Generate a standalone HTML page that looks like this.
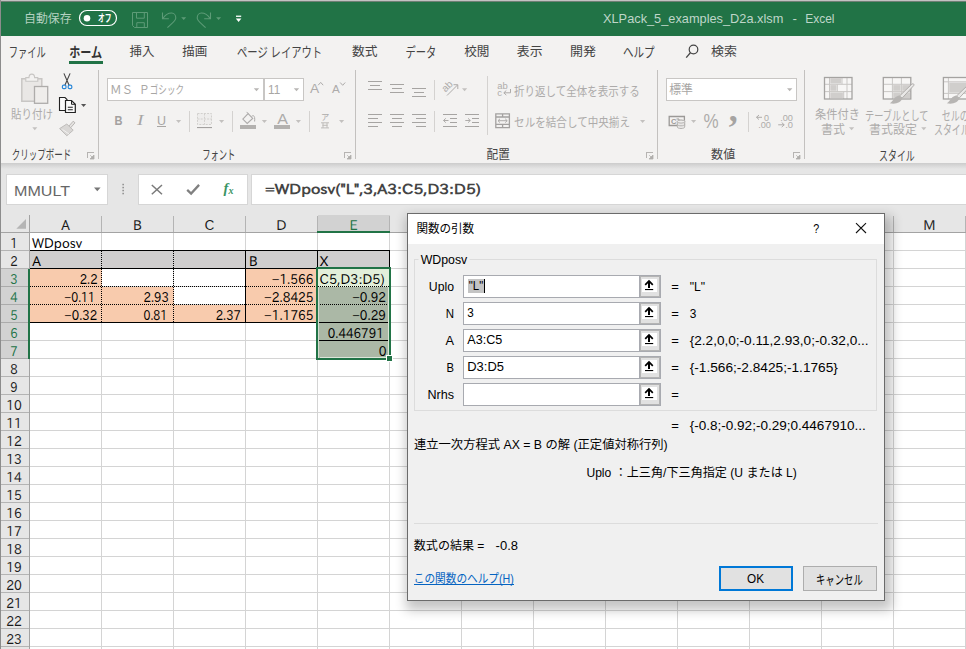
<!DOCTYPE html>
<html lang="ja"><head><meta charset="utf-8"><title>XLPack_5_examples_D2a.xlsm - Excel</title>
<style>
html,body{margin:0;padding:0;background:#fff;overflow:hidden}
body{width:966px;height:649px;position:relative;font-family:'Liberation Sans','Noto Sans CJK JP',sans-serif}
svg{position:absolute;left:0;top:0;display:block}
svg{font-family:'Liberation Sans','Noto Sans CJK JP',sans-serif}
svg text{white-space:pre}
.crisp{shape-rendering:crispEdges}
</style></head><body>
<svg width="966" height="649" viewBox="0 0 966 649">
<defs>
<filter id="blur6" x="-10%" y="-10%" width="120%" height="120%"><feGaussianBlur stdDeviation="6"/></filter>
<linearGradient id="rshadow" x1="0" y1="0" x2="0" y2="1"><stop offset="0" stop-color="#cccccc"/><stop offset="1" stop-color="#e6e6e6"/></linearGradient>
</defs>
<g id="window">
<rect x="0" y="0" width="966" height="649" fill="#ffffff" />
<rect x="0" y="0" width="966" height="36" fill="#217346" class="crisp"/>
<rect x="0" y="36" width="966" height="127" fill="#f3f2f1" class="crisp"/>
<rect x="0" y="163" width="966" height="70" fill="#e6e6e6" class="crisp"/>
<rect x="0" y="163" width="966" height="6" fill="url(#rshadow)" class="crisp"/>
</g>
<g id="titlebar">
<text x="24" y="22.6" font-size="12" fill="#b4d1c0" textLength="47.6" lengthAdjust="spacingAndGlyphs">自動保存</text>
<rect x="79.5" y="10.5" width="37" height="15" rx="7.5" fill="none" stroke="#ffffff" stroke-width="1.2"/>
<circle cx="87" cy="18.2" r="3.3" fill="#ffffff"/>
<text x="98" y="22.3" font-size="10" fill="#ffffff" textLength="13.5" lengthAdjust="spacingAndGlyphs" font-weight="bold">オフ</text>
<path d="M132.5 12.5h15v15h-13l-2-2z M136.5 12.5v5.7h7.8v-5.7 M136.8 27.5v-4.8h7.5v4.8" fill="none" stroke="#5d9b77" stroke-width="1" />
<path d="M162.5 12.4v6.4h6.3" fill="none" stroke="#5d9b77" stroke-width="1.1" />
<path d="M162.8 18.6C165 15.2 168.3 13 171.6 13C174.2 13 175.8 15.4 175.8 17.9C175.8 20.6 173.8 21.6 167.4 27.7" fill="none" stroke="#5d9b77" stroke-width="1.1" />
<path d="M181.2 17.3h5l-2.5 2.8z" fill="#5d9b77" />
<path d="M210.5 12.4v6.4h-6.3" fill="none" stroke="#5d9b77" stroke-width="1.1" />
<path d="M210.2 18.6C208 15.2 204.7 13 201.4 13C198.8 13 197.2 15.4 197.2 17.9C197.2 20.6 199.2 21.6 205.6 27.7" fill="none" stroke="#5d9b77" stroke-width="1.1" />
<path d="M216.1 17.3h5l-2.5 2.8z" fill="#5d9b77" />
<rect x="236" y="15.6" width="5.2" height="1.3" fill="#ffffff" />
<path d="M235.8 18.6h5.6l-2.8 3.4z" fill="#ffffff" />
<text x="603" y="23" font-size="13.3" fill="#bfd6c9" textLength="180.3" lengthAdjust="spacingAndGlyphs">XLPack_5_examples_D2a.xlsm</text>
<text x="792.4" y="23" font-size="13.3" fill="#bfd6c9">-</text>
<text x="805.3" y="23" font-size="13.3" fill="#bfd6c9" textLength="29.2" lengthAdjust="spacingAndGlyphs">Excel</text>
</g>
<g id="tabs">
<text x="8.7" y="56.8" font-size="13.6" fill="#444444" textLength="37.0" lengthAdjust="spacingAndGlyphs">ファイル</text>
<text x="129.5" y="56.3" font-size="12.5" fill="#444444" textLength="24.9" lengthAdjust="spacingAndGlyphs">挿入</text>
<text x="182.3" y="56.3" font-size="12.5" fill="#444444" textLength="25.0" lengthAdjust="spacingAndGlyphs">描画</text>
<text x="237" y="56.8" font-size="13.6" fill="#444444" textLength="85.2" lengthAdjust="spacingAndGlyphs">ページ レイアウト</text>
<text x="352.1" y="56.3" font-size="12.5" fill="#444444" textLength="25.5" lengthAdjust="spacingAndGlyphs">数式</text>
<text x="405.5" y="56.8" font-size="13.6" fill="#444444" textLength="30.8" lengthAdjust="spacingAndGlyphs">データ</text>
<text x="464.2" y="56.3" font-size="12.5" fill="#444444" textLength="25.2" lengthAdjust="spacingAndGlyphs">校閲</text>
<text x="516.8" y="56.3" font-size="12.5" fill="#444444" textLength="25.7" lengthAdjust="spacingAndGlyphs">表示</text>
<text x="569.9" y="56.3" font-size="12.5" fill="#444444" textLength="26.0" lengthAdjust="spacingAndGlyphs">開発</text>
<text x="623" y="56.8" font-size="13.6" fill="#444444" textLength="31.6" lengthAdjust="spacingAndGlyphs">ヘルプ</text>
<text x="711" y="56.3" font-size="12.5" fill="#444444" textLength="26" lengthAdjust="spacingAndGlyphs">検索</text>
<text x="69.2" y="56.8" font-size="13.6" fill="#333" textLength="33" lengthAdjust="spacingAndGlyphs" font-weight="bold">ホーム</text>
<rect x="69" y="61" width="34" height="3" fill="#217346" class="crisp"/>
<circle cx="693.5" cy="49.5" r="4.3" fill="none" stroke="#444" stroke-width="1.2"/>
<line x1="690.4" y1="52.8" x2="686.2" y2="57.6" stroke="#444" stroke-width="1.3" />
</g>
<g id="ribbon">
<line x1="98.5" y1="70" x2="98.5" y2="158.5" stroke="#c3c1bf" stroke-width="1" class="crisp"/>
<line x1="355.5" y1="70" x2="355.5" y2="158.5" stroke="#c3c1bf" stroke-width="1" class="crisp"/>
<line x1="657.5" y1="70" x2="657.5" y2="158.5" stroke="#c3c1bf" stroke-width="1" class="crisp"/>
<line x1="804.5" y1="70" x2="804.5" y2="158.5" stroke="#c3c1bf" stroke-width="1" class="crisp"/>
<line x1="189.5" y1="111" x2="189.5" y2="131.5" stroke="#d4d2d0" stroke-width="1" class="crisp"/>
<line x1="232.5" y1="111" x2="232.5" y2="131.5" stroke="#d4d2d0" stroke-width="1" class="crisp"/>
<line x1="309.5" y1="111" x2="309.5" y2="131.5" stroke="#d4d2d0" stroke-width="1" class="crisp"/>
<line x1="434.5" y1="79.5" x2="434.5" y2="99.5" stroke="#d4d2d0" stroke-width="1" class="crisp"/>
<line x1="434.5" y1="111" x2="434.5" y2="131.5" stroke="#d4d2d0" stroke-width="1" class="crisp"/>
<line x1="487.5" y1="76" x2="487.5" y2="134.5" stroke="#d4d2d0" stroke-width="1" class="crisp"/>
<line x1="748.5" y1="111.5" x2="748.5" y2="131.5" stroke="#d4d2d0" stroke-width="1" class="crisp"/>
<path d="M87.5 158v-5.5h6" fill="none" stroke="#b6b4b2" stroke-width="1" class="crisp"/>
<path d="M90 159h4v-4z M90.2 155.2l2.5 2.5" fill="#b0aeac" stroke="#b0aeac" stroke-width="0.8" />
<path d="M344.5 158v-5.5h6" fill="none" stroke="#b6b4b2" stroke-width="1" class="crisp"/>
<path d="M347 159h4v-4z M347.2 155.2l2.5 2.5" fill="#b0aeac" stroke="#b0aeac" stroke-width="0.8" />
<path d="M646.5 158v-5.5h6" fill="none" stroke="#b6b4b2" stroke-width="1" class="crisp"/>
<path d="M649 159h4v-4z M649.2 155.2l2.5 2.5" fill="#b0aeac" stroke="#b0aeac" stroke-width="0.8" />
<path d="M793.5 158v-5.5h6" fill="none" stroke="#b6b4b2" stroke-width="1" class="crisp"/>
<path d="M796 159h4v-4z M796.2 155.2l2.5 2.5" fill="#b0aeac" stroke="#b0aeac" stroke-width="0.8" />
<text x="11.8" y="159" font-size="13" fill="#444444" textLength="59.5" lengthAdjust="spacingAndGlyphs">クリップボード</text>
<text x="202.2" y="159" font-size="13" fill="#444444" textLength="33.2" lengthAdjust="spacingAndGlyphs">フォント</text>
<text x="486.5" y="159" font-size="12" fill="#444444" textLength="23.3" lengthAdjust="spacingAndGlyphs">配置</text>
<text x="711.1" y="159" font-size="12" fill="#444444" textLength="24.1" lengthAdjust="spacingAndGlyphs">数値</text>
<text x="879" y="159.5" font-size="13" fill="#444444" textLength="35.8" lengthAdjust="spacingAndGlyphs">スタイル</text>
<path d="M21.8 78.7h20v22.6h-20z" fill="#e9e7e5" stroke="#c8c6c4" stroke-width="1.5" />
<path d="M25.8 81.2v-3.6h3.2c0-4.6 5.6-4.6 5.6 0h3.2v3.6z" fill="#f3f2f1" stroke="#c8c6c4" stroke-width="1.1" />
<rect x="34.5" y="86.5" width="13.2" height="16.8" fill="#efedeb" stroke="#aeacaa" stroke-width="1.3" />
<text x="11.1" y="119.2" font-size="12" fill="#adabaa" textLength="41.9" lengthAdjust="spacingAndGlyphs">貼り付け</text>
<path d="M32.3 127.3h5l-2.5 3z" fill="#c3c1bf" />
<path d="M63.9 73.4l5.2 11.8 M70.1 73.4l-5.2 11.8" fill="none" stroke="#444" stroke-width="1.1" />
<rect x="62.4" y="85.2" width="3.6" height="3.4" rx="1.2" fill="#f3f2f1" stroke="#2b88d8" stroke-width="1.2"/>
<rect x="68.2" y="85.2" width="3.6" height="3.4" rx="1.2" fill="#f3f2f1" stroke="#2b88d8" stroke-width="1.2"/>
<path d="M59.5 97.5h5.5l2 2v11h-7.5z" fill="#fbfbfb" stroke="#222" stroke-width="1.1" />
<path d="M65.5 100.5h6l3.8 3.8v8.2h-9.8z" fill="#fbfbfb" stroke="#222" stroke-width="1.2" />
<path d="M71.5 100.5v3.8h3.8" fill="none" stroke="#222" stroke-width="1" />
<path d="M67.8 107.2h5 M67.8 109.7h5" fill="none" stroke="#222" stroke-width="1.1" />
<path d="M81 104.1h5.2l-2.6 3z" fill="#555" />
<path d="M73.2 121.2l1.8 1.6l-4.6 5.2l-1.8-1.6z" fill="#e4e2e0" stroke="#b3b1af" stroke-width="0.9" />
<path d="M59.6 128.6l7.2-4.6l6.4 6.2l-6.4 5.6z" fill="#d9d7d5" stroke="#bab8b6" stroke-width="0.9" />
<path d="M62.5 129.5l6.5 4.5" fill="none" stroke="#f3f2f1" stroke-width="1" />
<rect x="107.5" y="78.5" width="156" height="22" fill="#ffffff" stroke="#c8c6c4" stroke-width="1" />
<rect x="264.5" y="78.5" width="39" height="22" fill="#ffffff" stroke="#c8c6c4" stroke-width="1" />
<text x="110" y="94.3" font-size="11.5" fill="#a8a6a4" textLength="23.2" lengthAdjust="spacingAndGlyphs">ＭＳ</text>
<text x="138.9" y="94.3" font-size="11.5" fill="#a8a6a4" textLength="10.6" lengthAdjust="spacingAndGlyphs">Ｐ</text>
<text x="149.8" y="94.3" font-size="11.5" fill="#a8a6a4" textLength="34.2" lengthAdjust="spacingAndGlyphs">ゴシック</text>
<path d="M253.8 88.3h5.4l-2.7 3z" fill="#b8b6b4" />
<text x="268" y="94.3" font-size="12" fill="#a8a6a4" textLength="12.2" lengthAdjust="spacingAndGlyphs">11</text>
<path d="M293.8 88.3h5.4l-2.7 3z" fill="#b8b6b4" />
<text x="309.9" y="93" font-size="13.5" fill="#adabaa" textLength="9.2" lengthAdjust="spacingAndGlyphs">A</text>
<path d="M318.2 85.2l2.5-2.8l2.5 2.8" fill="none" stroke="#adabaa" stroke-width="1" />
<text x="332" y="93" font-size="11.5" fill="#adabaa" textLength="7.8" lengthAdjust="spacingAndGlyphs">A</text>
<path d="M340.2 82.5l2.5 2.8l2.5-2.8" fill="none" stroke="#adabaa" stroke-width="1" />
<text x="114.4" y="124.7" font-size="13.5" fill="#a3a1a0" textLength="8" lengthAdjust="spacingAndGlyphs" font-weight="bold">B</text>
<text x="136.9" y="124.7" font-size="14" fill="#a8a6a4" textLength="6.5" lengthAdjust="spacingAndGlyphs" font-family='"Liberation Serif",serif' font-style="italic">I</text>
<text x="157" y="124.5" font-size="13" fill="#a8a6a4" textLength="9" lengthAdjust="spacingAndGlyphs">U</text>
<rect x="157" y="126" width="9" height="1" fill="#a8a6a4" class="crisp"/>
<path d="M176 120h5.2l-2.6 3z" fill="#c3c1bf" />
<rect x="197.5" y="113.5" width="14" height="11" fill="#eeedec" />
<path d="M197.5 113.5h14v11h-14z M204.5 113.5v11 M197.5 119h14" fill="none" stroke="#d2d0ce" stroke-width="1" stroke-dasharray="2 1.2"/>
<rect x="197" y="127" width="15" height="1.1" fill="#a3a1a0" />
<path d="M219 120h5.2l-2.6 3z" fill="#c3c1bf" />
<path d="M242.8 119.1l5.3-5.6l4.6 4.9l-5.5 5z" fill="none" stroke="#adabaa" stroke-width="1.1" />
<path d="M248.2 113.6l-1.6-1.7 M251.6 116.3c2.3-1.7 3.6 0.2 3 5.2" fill="none" stroke="#adabaa" stroke-width="1" />
<rect x="240" y="125" width="16" height="4" fill="#b3b1af" class="crisp"/>
<path d="M261.8 120h5.2l-2.6 3z" fill="#c3c1bf" />
<text x="277.3" y="123.6" font-size="14.5" fill="#adabaa" textLength="10.7" lengthAdjust="spacingAndGlyphs">A</text>
<rect x="274" y="125" width="16" height="4" fill="#b3b1af" class="crisp"/>
<path d="M295.8 120h5.2l-2.6 3z" fill="#c3c1bf" />
<text x="321" y="120" font-size="8.3" fill="#adabaa">ア</text>
<path d="M321 122.8h8 M322.5 125.3h5 M321 127.9h8 M323 122.8v5 M327 122.8v5" fill="none" stroke="#bebcba" stroke-width="1" />
<path d="M339 120h5.2l-2.6 3z" fill="#c3c1bf" />
<rect x="368.0" y="81" width="14" height="1" fill="#a6a4a2" class="crisp"/>
<rect x="370.0" y="85" width="10" height="1" fill="#a6a4a2" class="crisp"/>
<rect x="368.0" y="89" width="14" height="1" fill="#a6a4a2" class="crisp"/>
<rect x="390.0" y="84" width="14" height="1" fill="#a6a4a2" class="crisp"/>
<rect x="392.0" y="88" width="10" height="1" fill="#a6a4a2" class="crisp"/>
<rect x="390.0" y="92" width="14" height="1" fill="#a6a4a2" class="crisp"/>
<rect x="412.0" y="88" width="14" height="1" fill="#a6a4a2" class="crisp"/>
<rect x="414.0" y="92" width="10" height="1" fill="#a6a4a2" class="crisp"/>
<rect x="412.0" y="96" width="14" height="1" fill="#a6a4a2" class="crisp"/>
<rect x="368" y="114" width="14" height="1" fill="#a6a4a2" class="crisp"/>
<rect x="368" y="118" width="10" height="1" fill="#a6a4a2" class="crisp"/>
<rect x="368" y="122" width="14" height="1" fill="#a6a4a2" class="crisp"/>
<rect x="368" y="126" width="10" height="1" fill="#a6a4a2" class="crisp"/>
<rect x="390.0" y="114" width="14" height="1" fill="#a6a4a2" class="crisp"/>
<rect x="392.0" y="118" width="10" height="1" fill="#a6a4a2" class="crisp"/>
<rect x="390.0" y="122" width="14" height="1" fill="#a6a4a2" class="crisp"/>
<rect x="392.0" y="126" width="10" height="1" fill="#a6a4a2" class="crisp"/>
<rect x="412" y="114" width="14" height="1" fill="#a6a4a2" class="crisp"/>
<rect x="416" y="118" width="10" height="1" fill="#a6a4a2" class="crisp"/>
<rect x="412" y="122" width="14" height="1" fill="#a6a4a2" class="crisp"/>
<rect x="416" y="126" width="10" height="1" fill="#a6a4a2" class="crisp"/>
<text x='0' y='0' font-size='10' fill='#aeacaa' transform='translate(445.6 92.6) rotate(-45)'>ab</text>
<path d="M447 95.5l10.5-10.5 M453.5 84.7h4.3v4.3" fill="none" stroke="#aeacaa" stroke-width="1" />
<path d="M462 88.3h5.2l-2.6 3z" fill="#c3c1bf" />
<rect x="443" y="114" width="14" height="1" fill="#a6a4a2" class="crisp"/>
<rect x="443" y="126" width="14" height="1" fill="#a6a4a2" class="crisp"/>
<rect x="450" y="118" width="7" height="1" fill="#a6a4a2" class="crisp"/>
<rect x="450" y="122" width="7" height="1" fill="#a6a4a2" class="crisp"/>
<path d="M448.5 120.5h-5 M445.8 118.3l-2.3 2.2l2.3 2.2" fill="none" stroke="#aeacaa" stroke-width="1" />
<rect x="465" y="114" width="14" height="1" fill="#a6a4a2" class="crisp"/>
<rect x="465" y="126" width="14" height="1" fill="#a6a4a2" class="crisp"/>
<rect x="472" y="118" width="7" height="1" fill="#a6a4a2" class="crisp"/>
<rect x="472" y="122" width="7" height="1" fill="#a6a4a2" class="crisp"/>
<path d="M465.3 120.5h5 M468 118.3l2.3 2.2l-2.3 2.2" fill="none" stroke="#aeacaa" stroke-width="1" />
<text x="497.3" y="89.3" font-size="9.5" fill="#aeacaa" textLength="10.5" lengthAdjust="spacingAndGlyphs">ab</text>
<text x="497.3" y="96.3" font-size="9.5" fill="#aeacaa">c</text>
<path d="M510.5 89v3.8h-6.5 M506.3 90.5l-2.5 2.3l2.5 2.3" fill="none" stroke="#aeacaa" stroke-width="1" />
<text x="514.1" y="95.8" font-size="12" fill="#adabaa" textLength="125.8" lengthAdjust="spacingAndGlyphs">折り返して全体を表示する</text>
<path d="M495.8 113.8h13.6v13.8h-13.6z M495.8 117h13.6 M495.8 124.4h13.6 M502.6 113.8v3.2 M502.6 124.4v3.2" fill="none" stroke="#a3a1a0" stroke-width="1.3" />
<path d="M498 120.7h9.2 M500 118.8l-2 1.9l2 1.9 M505.2 118.8l2 1.9l-2 1.9" fill="none" stroke="#aeacaa" stroke-width="1" />
<text x="514.1" y="127.2" font-size="12" fill="#adabaa" textLength="115.9" lengthAdjust="spacingAndGlyphs">セルを結合して中央揃え</text>
<path d="M640 120h5.2l-2.6 3z" fill="#c3c1bf" />
<rect x="666.5" y="78.5" width="130" height="22" fill="#ffffff" stroke="#c8c6c4" stroke-width="1" />
<text x="669.2" y="94.4" font-size="12" fill="#a8a6a4" textLength="23.7" lengthAdjust="spacingAndGlyphs">標準</text>
<path d="M787 88.3h5.4l-2.7 3z" fill="#b8b6b4" />
<path d="M669.2 116.5h15.2v9h-15.2z" fill="none" stroke="#9b9997" stroke-width="1.3" />
<text x="671" y="123.6" font-size="7.5" fill="#9b9997" font-weight="bold">C</text>
<path d="M676.5 119h2.5v3" fill="none" stroke="#9b9997" stroke-width="1" />
<ellipse cx="681" cy="121.6" rx="3.7" ry="1.5" fill="#f3f2f1" stroke="#b5b3b1" stroke-width="1"/>
<path d="M677.3 121.6v5.4c0 2 7.4 2 7.4 0v-5.4 M677.3 124.3c0 2 7.4 2 7.4 0" fill="#e8e7e6" stroke="#b5b3b1" stroke-width="1" />
<ellipse cx="681" cy="121.6" rx="3.7" ry="1.5" fill="#efeeed" stroke="#b5b3b1" stroke-width="1"/>
<path d="M691 120h5.2l-2.6 3z" fill="#c3c1bf" />
<text x="703.5" y="128.2" font-size="20" fill="#aeacaa" textLength="15.1" lengthAdjust="spacingAndGlyphs">%</text>
<text x="728.8" y="120.8" font-size="36" fill="#a6a4a2" font-weight="bold" font-family='"Liberation Serif",serif'>,</text>
<path d="M756.5 117.3h5.5 M759.0 115l-2.5 2.3l2.5 2.3" fill="none" stroke="#aeacaa" stroke-width="1" />
<text x="764.0" y="120.5" font-size="9" fill="#aeacaa" textLength="5" lengthAdjust="spacingAndGlyphs">0</text>
<text x="758.2" y="128.3" font-size="9" fill="#aeacaa" textLength="12.8" lengthAdjust="spacingAndGlyphs">.00</text>
<text x="780.2" y="120.5" font-size="9" fill="#aeacaa" textLength="12.8" lengthAdjust="spacingAndGlyphs">.00</text>
<path d="M778.2 124.8h6 M781.7 122.5l2.5 2.3l-2.5 2.3" fill="none" stroke="#aeacaa" stroke-width="1" />
<text x="785.2" y="128.3" font-size="9" fill="#aeacaa" textLength="7.8" lengthAdjust="spacingAndGlyphs">.0</text>
<rect x="824.5" y="77.5" width="27.5" height="21.5" fill="#f7f6f5" />
<rect x="830.3" y="78.3" width="10.9" height="5.1999999999999975" fill="#d0cecc" />
<rect x="830.3" y="85.1" width="6.199999999999955" height="5.6999999999999975" fill="#d0cecc" />
<rect x="830.3" y="92.39999999999999" width="12.600000000000046" height="5.800000000000006" fill="#d0cecc" />
<line x1="829.5" y1="77.5" x2="829.5" y2="99.0" stroke="#c9c7c5" stroke-width="1" />
<line x1="847" y1="77.5" x2="847" y2="99.0" stroke="#c9c7c5" stroke-width="1" />
<line x1="824.5" y1="84.3" x2="852.0" y2="84.3" stroke="#c9c7c5" stroke-width="1" />
<line x1="824.5" y1="91.6" x2="852.0" y2="91.6" stroke="#c9c7c5" stroke-width="1" />
<line x1="842" y1="77.5" x2="842" y2="84.3" stroke="#c9c7c5" stroke-width="1" />
<line x1="837.3" y1="84.3" x2="837.3" y2="91.6" stroke="#c9c7c5" stroke-width="1" />
<line x1="843.7" y1="91.6" x2="843.7" y2="99" stroke="#c9c7c5" stroke-width="1" />
<rect x="824.5" y="77.5" width="27.5" height="21.5" fill="none" stroke="#a5a3a1" stroke-width="1.3" />
<text x="815.1" y="119.4" font-size="12" fill="#adabaa" textLength="45" lengthAdjust="spacingAndGlyphs">条件付き</text>
<text x="821" y="133.8" font-size="12" fill="#adabaa" textLength="24" lengthAdjust="spacingAndGlyphs">書式</text>
<path d="M849 127.2h5.2l-2.6 3z" fill="#c3c1bf" />
<rect x="883.3" y="77.5" width="27.5" height="21.5" fill="#f7f6f5" />
<rect x="893.1999999999999" y="85.1" width="7.4" height="5.6999999999999975" fill="#d0cecc" />
<rect x="902.1999999999999" y="85.1" width="7.799999999999978" height="5.6999999999999975" fill="#d0cecc" />
<rect x="893.1999999999999" y="92.39999999999999" width="7.4" height="5.800000000000006" fill="#d0cecc" />
<rect x="902.1999999999999" y="92.39999999999999" width="7.799999999999978" height="5.800000000000006" fill="#d0cecc" />
<line x1="892.4" y1="77.5" x2="892.4" y2="99.0" stroke="#c9c7c5" stroke-width="1" />
<line x1="901.4" y1="77.5" x2="901.4" y2="99.0" stroke="#c9c7c5" stroke-width="1" />
<line x1="883.3" y1="84.3" x2="910.8" y2="84.3" stroke="#c9c7c5" stroke-width="1" />
<line x1="883.3" y1="91.6" x2="910.8" y2="91.6" stroke="#c9c7c5" stroke-width="1" />
<rect x="883.3" y="77.5" width="27.5" height="21.5" fill="none" stroke="#a5a3a1" stroke-width="1.3" />
<path d="M911.9 84.1c1.4-1 2.6 0.2 1.8 1.5l-11.6 12.6l-2.6-2.2z" fill="#e9e8e7" stroke="#a9a7a5" stroke-width="0.9" />
<path d="M899.0 95.6l3.4 3c-1.4 4-7 6-12.6 4.6c3.4-1.2 3.6-6.2 9.2-7.6z" fill="#b7b5b3" />
<text x="865" y="119.8" font-size="12.8" fill="#adabaa" textLength="63.5" lengthAdjust="spacingAndGlyphs">テーブルとして</text>
<text x="869.1" y="133.8" font-size="12" fill="#adabaa" textLength="47.8" lengthAdjust="spacingAndGlyphs">書式設定</text>
<path d="M921.2 127.2h5.2l-2.6 3z" fill="#c3c1bf" />
<rect x="943.4" y="77.5" width="27.5" height="21.5" fill="#f7f6f5" />
<rect x="949.1999999999999" y="82.6" width="21.00000000000002" height="10.000000000000009" fill="#d0cecc" />
<line x1="948.4" y1="77.5" x2="948.4" y2="99.0" stroke="#c9c7c5" stroke-width="1" />
<line x1="943.4" y1="81.8" x2="970.9" y2="81.8" stroke="#c9c7c5" stroke-width="1" />
<line x1="943.4" y1="93.4" x2="970.9" y2="93.4" stroke="#c9c7c5" stroke-width="1" />
<rect x="943.4" y="77.5" width="27.5" height="21.5" fill="none" stroke="#a5a3a1" stroke-width="1.3" />
<path d="M968.9 84.1c1.4-1 2.6 0.2 1.8 1.5l-11.6 12.6l-2.6-2.2z" fill="#e9e8e7" stroke="#a9a7a5" stroke-width="0.9" />
<path d="M956.0 95.6l3.4 3c-1.4 4-7 6-12.6 4.6c3.4-1.2 3.6-6.2 9.2-7.6z" fill="#b7b5b3" />
<text x="941.8" y="119.8" font-size="12.8" fill="#adabaa" textLength="27" lengthAdjust="spacingAndGlyphs">セルの</text>
<text x="934" y="134.2" font-size="12.8" fill="#adabaa" textLength="35.5" lengthAdjust="spacingAndGlyphs">スタイル</text>
</g>
<g id="formulabar">
<rect x="6.5" y="174.5" width="101" height="30" fill="#ffffff" stroke="#d6d6d6" stroke-width="1" />
<rect x="138.5" y="174.5" width="109" height="30" fill="#ffffff" stroke="#d6d6d6" stroke-width="1" />
<rect x="251.5" y="174.5" width="720" height="30" fill="#ffffff" stroke="#d6d6d6" stroke-width="1" />
<text x="14" y="196.3" font-size="15" fill="#666" textLength="56" lengthAdjust="spacingAndGlyphs">MMULT</text>
<path d="M94 187.5h6.6l-3.3 3.7z" fill="#777" />
<rect x="122.4" y="183.8" width="1.5" height="1.5" fill="#8c8c8c" />
<rect x="122.4" y="186.8" width="1.5" height="1.5" fill="#8c8c8c" />
<rect x="122.4" y="189.8" width="1.5" height="1.5" fill="#8c8c8c" />
<rect x="122.4" y="192.8" width="1.5" height="1.5" fill="#8c8c8c" />
<path d="M151.8 185l10.2 9.3 M162 185l-10.2 9.3" fill="none" stroke="#7a7a7a" stroke-width="1.5" />
<path d="M187.2 189.8l3.9 3.7l8-8.6" fill="none" stroke="#808080" stroke-width="2.3" />
<text x="223.6" y="193.3" font-size="14.5" fill="#3a9463" font-weight="bold" font-family='"Liberation Serif",serif' font-style="italic">f</text>
<text x="228.4" y="193.8" font-size="10" fill="#3a9463" font-weight="bold" font-family='"Liberation Serif",serif' font-style="italic">x</text>
<text x="265" y="193.8" font-size="13.8" fill="#444" textLength="216" lengthAdjust="spacingAndGlyphs" font-weight="bold" font-family='"IPAPGothic","IPAGothic","Liberation Sans","Noto Sans CJK JP",sans-serif'>=WDposv("L",3,A3:C5,D3:D5)</text>
</g>
<g id="grid">
<rect x="30" y="233" width="936" height="416" fill="#ffffff" class="crisp"/>
<rect x="0" y="215" width="966" height="18" fill="#e6e6e6" class="crisp"/>
<rect x="0" y="233" width="29" height="416" fill="#e6e6e6" class="crisp"/>
<rect x="30" y="251" width="360" height="18" fill="#d0cece" class="crisp"/>
<rect x="30" y="269" width="72" height="54" fill="#f8cbad" class="crisp"/>
<rect x="102" y="287" width="72" height="36" fill="#f8cbad" class="crisp"/>
<rect x="174" y="305" width="72" height="18" fill="#f8cbad" class="crisp"/>
<rect x="246" y="269" width="72" height="54" fill="#f8cbad" class="crisp"/>
<rect x="318" y="269" width="72" height="18" fill="#e2efda" class="crisp"/>
<rect x="318" y="287" width="72" height="72" fill="#abb8a6" class="crisp"/>
<rect x="318" y="215" width="72" height="18" fill="#d2d2d2" class="crisp"/>
<rect x="0" y="269" width="29" height="90" fill="#d2d2d2" class="crisp"/>
<rect x="30" y="250" width="936" height="1" fill="#d4d4d4" class="crisp"/>
<rect x="0" y="250" width="29" height="1" fill="#b4b4b4" class="crisp"/>
<rect x="30" y="268" width="936" height="1" fill="#d4d4d4" class="crisp"/>
<rect x="0" y="268" width="29" height="1" fill="#b4b4b4" class="crisp"/>
<rect x="30" y="286" width="936" height="1" fill="#d4d4d4" class="crisp"/>
<rect x="0" y="286" width="29" height="1" fill="#ababab" class="crisp"/>
<rect x="30" y="304" width="936" height="1" fill="#d4d4d4" class="crisp"/>
<rect x="0" y="304" width="29" height="1" fill="#ababab" class="crisp"/>
<rect x="30" y="322" width="936" height="1" fill="#d4d4d4" class="crisp"/>
<rect x="0" y="322" width="29" height="1" fill="#ababab" class="crisp"/>
<rect x="30" y="340" width="936" height="1" fill="#d4d4d4" class="crisp"/>
<rect x="0" y="340" width="29" height="1" fill="#ababab" class="crisp"/>
<rect x="30" y="358" width="936" height="1" fill="#d4d4d4" class="crisp"/>
<rect x="0" y="358" width="29" height="1" fill="#ababab" class="crisp"/>
<rect x="30" y="376" width="936" height="1" fill="#d4d4d4" class="crisp"/>
<rect x="0" y="376" width="29" height="1" fill="#b4b4b4" class="crisp"/>
<rect x="30" y="394" width="936" height="1" fill="#d4d4d4" class="crisp"/>
<rect x="0" y="394" width="29" height="1" fill="#b4b4b4" class="crisp"/>
<rect x="30" y="412" width="936" height="1" fill="#d4d4d4" class="crisp"/>
<rect x="0" y="412" width="29" height="1" fill="#b4b4b4" class="crisp"/>
<rect x="30" y="430" width="936" height="1" fill="#d4d4d4" class="crisp"/>
<rect x="0" y="430" width="29" height="1" fill="#b4b4b4" class="crisp"/>
<rect x="30" y="448" width="936" height="1" fill="#d4d4d4" class="crisp"/>
<rect x="0" y="448" width="29" height="1" fill="#b4b4b4" class="crisp"/>
<rect x="30" y="466" width="936" height="1" fill="#d4d4d4" class="crisp"/>
<rect x="0" y="466" width="29" height="1" fill="#b4b4b4" class="crisp"/>
<rect x="30" y="484" width="936" height="1" fill="#d4d4d4" class="crisp"/>
<rect x="0" y="484" width="29" height="1" fill="#b4b4b4" class="crisp"/>
<rect x="30" y="502" width="936" height="1" fill="#d4d4d4" class="crisp"/>
<rect x="0" y="502" width="29" height="1" fill="#b4b4b4" class="crisp"/>
<rect x="30" y="520" width="936" height="1" fill="#d4d4d4" class="crisp"/>
<rect x="0" y="520" width="29" height="1" fill="#b4b4b4" class="crisp"/>
<rect x="30" y="538" width="936" height="1" fill="#d4d4d4" class="crisp"/>
<rect x="0" y="538" width="29" height="1" fill="#b4b4b4" class="crisp"/>
<rect x="30" y="556" width="936" height="1" fill="#d4d4d4" class="crisp"/>
<rect x="0" y="556" width="29" height="1" fill="#b4b4b4" class="crisp"/>
<rect x="30" y="574" width="936" height="1" fill="#d4d4d4" class="crisp"/>
<rect x="0" y="574" width="29" height="1" fill="#b4b4b4" class="crisp"/>
<rect x="30" y="592" width="936" height="1" fill="#d4d4d4" class="crisp"/>
<rect x="0" y="592" width="29" height="1" fill="#b4b4b4" class="crisp"/>
<rect x="30" y="610" width="936" height="1" fill="#d4d4d4" class="crisp"/>
<rect x="0" y="610" width="29" height="1" fill="#b4b4b4" class="crisp"/>
<rect x="30" y="628" width="936" height="1" fill="#d4d4d4" class="crisp"/>
<rect x="0" y="628" width="29" height="1" fill="#b4b4b4" class="crisp"/>
<rect x="30" y="646" width="936" height="1" fill="#d4d4d4" class="crisp"/>
<rect x="0" y="646" width="29" height="1" fill="#b4b4b4" class="crisp"/>
<rect x="101" y="233" width="1" height="416" fill="#d4d4d4" class="crisp"/>
<rect x="101" y="216" width="1" height="16" fill="#b4b4b4" class="crisp"/>
<rect x="173" y="233" width="1" height="416" fill="#d4d4d4" class="crisp"/>
<rect x="173" y="216" width="1" height="16" fill="#b4b4b4" class="crisp"/>
<rect x="245" y="233" width="1" height="416" fill="#d4d4d4" class="crisp"/>
<rect x="245" y="216" width="1" height="16" fill="#b4b4b4" class="crisp"/>
<rect x="317" y="233" width="1" height="416" fill="#d4d4d4" class="crisp"/>
<rect x="317" y="216" width="1" height="16" fill="#b4b4b4" class="crisp"/>
<rect x="389" y="233" width="1" height="416" fill="#d4d4d4" class="crisp"/>
<rect x="389" y="216" width="1" height="16" fill="#b4b4b4" class="crisp"/>
<rect x="461" y="233" width="1" height="416" fill="#d4d4d4" class="crisp"/>
<rect x="461" y="216" width="1" height="16" fill="#b4b4b4" class="crisp"/>
<rect x="533" y="233" width="1" height="416" fill="#d4d4d4" class="crisp"/>
<rect x="533" y="216" width="1" height="16" fill="#b4b4b4" class="crisp"/>
<rect x="605" y="233" width="1" height="416" fill="#d4d4d4" class="crisp"/>
<rect x="605" y="216" width="1" height="16" fill="#b4b4b4" class="crisp"/>
<rect x="677" y="233" width="1" height="416" fill="#d4d4d4" class="crisp"/>
<rect x="677" y="216" width="1" height="16" fill="#b4b4b4" class="crisp"/>
<rect x="749" y="233" width="1" height="416" fill="#d4d4d4" class="crisp"/>
<rect x="749" y="216" width="1" height="16" fill="#b4b4b4" class="crisp"/>
<rect x="821" y="233" width="1" height="416" fill="#d4d4d4" class="crisp"/>
<rect x="821" y="216" width="1" height="16" fill="#b4b4b4" class="crisp"/>
<rect x="893" y="233" width="1" height="416" fill="#d4d4d4" class="crisp"/>
<rect x="893" y="216" width="1" height="16" fill="#b4b4b4" class="crisp"/>
<rect x="965" y="233" width="1" height="416" fill="#d4d4d4" class="crisp"/>
<rect x="965" y="216" width="1" height="16" fill="#b4b4b4" class="crisp"/>
<rect x="29" y="215" width="1" height="434" fill="#a3a3a3" class="crisp"/>
<rect x="0" y="232" width="966" height="1" fill="#a3a3a3" class="crisp"/>
<rect x="30" y="251" width="360" height="17" fill="#d0cece" class="crisp"/>
<rect x="30" y="269" width="72" height="54" fill="#f8cbad" class="crisp"/>
<rect x="102" y="287" width="72" height="36" fill="#f8cbad" class="crisp"/>
<rect x="174" y="305" width="72" height="18" fill="#f8cbad" class="crisp"/>
<rect x="246" y="269" width="72" height="54" fill="#f8cbad" class="crisp"/>
<rect x="318" y="269" width="72" height="18" fill="#e2efda" class="crisp"/>
<rect x="318" y="287" width="72" height="72" fill="#abb8a6" class="crisp"/>
<rect x="30" y="250" width="360" height="1" fill="#000000" class="crisp"/>
<rect x="30" y="268" width="360" height="1" fill="#000000" class="crisp"/>
<rect x="30" y="322" width="288" height="1" fill="#000000" class="crisp"/>
<rect x="245" y="250" width="1" height="73" fill="#000000" class="crisp"/>
<rect x="317" y="250" width="1" height="73" fill="#000000" class="crisp"/>
<rect x="389" y="250" width="1" height="19" fill="#000000" class="crisp"/>
<rect x="318" y="322" width="72" height="1" fill="#000000" class="crisp"/>
<rect x="318" y="340" width="72" height="1" fill="#000000" class="crisp"/>
<line x1="30" y1="286.5" x2="390" y2="286.5" stroke="#000" stroke-width="1" stroke-dasharray="1 1" class="crisp"/>
<line x1="30" y1="304.5" x2="390" y2="304.5" stroke="#000" stroke-width="1" stroke-dasharray="1 1" class="crisp"/>
<line x1="101.5" y1="251" x2="101.5" y2="322" stroke="#000" stroke-width="1" stroke-dasharray="1 1" class="crisp"/>
<line x1="173.5" y1="251" x2="173.5" y2="322" stroke="#000" stroke-width="1" stroke-dasharray="1 1" class="crisp"/>
<rect x="28" y="269" width="2" height="90" fill="#217346" class="crisp"/>
<rect x="317" y="231" width="73" height="2" fill="#217346" class="crisp"/>
<rect x="316" y="267" width="75" height="2" fill="#217346" class="crisp"/>
<rect x="316" y="358" width="70" height="2" fill="#217346" class="crisp"/>
<rect x="316" y="267" width="2" height="93" fill="#217346" class="crisp"/>
<rect x="389" y="267" width="2" height="88" fill="#217346" class="crisp"/>
<rect x="388" y="287" width="1" height="71" fill="#dde6da" class="crisp"/>
<rect x="318" y="287" width="1" height="71" fill="#d3dcd0" class="crisp"/>
<rect x="320" y="357" width="68" height="1" fill="#dde6da" class="crisp"/>
<rect x="386" y="355" width="7" height="7" fill="#ffffff" class="crisp"/>
<rect x="387" y="356" width="5" height="5" fill="#217346" class="crisp"/>
<path d="M16.3 228.8h9.7v-9.7z" fill="#b5b5b5" />
<text x="65.5" y="229.5" font-size="13.6" fill="#1a1a1a" font-family='"IPAPGothic","IPAGothic","Liberation Sans","Noto Sans CJK JP",sans-serif' text-anchor="middle">A</text>
<text x="137.5" y="229.5" font-size="13.6" fill="#1a1a1a" font-family='"IPAPGothic","IPAGothic","Liberation Sans","Noto Sans CJK JP",sans-serif' text-anchor="middle">B</text>
<text x="209.5" y="229.5" font-size="13.6" fill="#1a1a1a" font-family='"IPAPGothic","IPAGothic","Liberation Sans","Noto Sans CJK JP",sans-serif' text-anchor="middle">C</text>
<text x="281.5" y="229.5" font-size="13.6" fill="#1a1a1a" font-family='"IPAPGothic","IPAGothic","Liberation Sans","Noto Sans CJK JP",sans-serif' text-anchor="middle">D</text>
<text x="353.5" y="229.5" font-size="13.6" fill="#217346" font-family='"IPAPGothic","IPAGothic","Liberation Sans","Noto Sans CJK JP",sans-serif' text-anchor="middle">E</text>
<text x="929.5" y="229.5" font-size="13.6" fill="#1a1a1a" font-family='"IPAPGothic","IPAGothic","Liberation Sans","Noto Sans CJK JP",sans-serif' text-anchor="middle">M</text>
<text x="14" y="247.6" font-size="13.5" fill="#1a1a1a" textLength="7.4" lengthAdjust="spacingAndGlyphs" font-family='"IPAPGothic","IPAGothic","Liberation Sans","Noto Sans CJK JP",sans-serif' text-anchor="middle">1</text>
<text x="14" y="265.6" font-size="13.5" fill="#1a1a1a" textLength="7.4" lengthAdjust="spacingAndGlyphs" font-family='"IPAPGothic","IPAGothic","Liberation Sans","Noto Sans CJK JP",sans-serif' text-anchor="middle">2</text>
<text x="14" y="283.6" font-size="13.5" fill="#217346" textLength="7.4" lengthAdjust="spacingAndGlyphs" font-family='"IPAPGothic","IPAGothic","Liberation Sans","Noto Sans CJK JP",sans-serif' text-anchor="middle">3</text>
<text x="14" y="301.6" font-size="13.5" fill="#217346" textLength="7.4" lengthAdjust="spacingAndGlyphs" font-family='"IPAPGothic","IPAGothic","Liberation Sans","Noto Sans CJK JP",sans-serif' text-anchor="middle">4</text>
<text x="14" y="319.6" font-size="13.5" fill="#217346" textLength="7.4" lengthAdjust="spacingAndGlyphs" font-family='"IPAPGothic","IPAGothic","Liberation Sans","Noto Sans CJK JP",sans-serif' text-anchor="middle">5</text>
<text x="14" y="337.6" font-size="13.5" fill="#217346" textLength="7.4" lengthAdjust="spacingAndGlyphs" font-family='"IPAPGothic","IPAGothic","Liberation Sans","Noto Sans CJK JP",sans-serif' text-anchor="middle">6</text>
<text x="14" y="355.6" font-size="13.5" fill="#217346" textLength="7.4" lengthAdjust="spacingAndGlyphs" font-family='"IPAPGothic","IPAGothic","Liberation Sans","Noto Sans CJK JP",sans-serif' text-anchor="middle">7</text>
<text x="14" y="373.6" font-size="13.5" fill="#1a1a1a" textLength="7.4" lengthAdjust="spacingAndGlyphs" font-family='"IPAPGothic","IPAGothic","Liberation Sans","Noto Sans CJK JP",sans-serif' text-anchor="middle">8</text>
<text x="14" y="391.6" font-size="13.5" fill="#1a1a1a" textLength="7.4" lengthAdjust="spacingAndGlyphs" font-family='"IPAPGothic","IPAGothic","Liberation Sans","Noto Sans CJK JP",sans-serif' text-anchor="middle">9</text>
<text x="14" y="409.6" font-size="13.5" fill="#1a1a1a" textLength="15.6" lengthAdjust="spacingAndGlyphs" font-family='"IPAPGothic","IPAGothic","Liberation Sans","Noto Sans CJK JP",sans-serif' text-anchor="middle">10</text>
<text x="14" y="427.6" font-size="13.5" fill="#1a1a1a" textLength="15.6" lengthAdjust="spacingAndGlyphs" font-family='"IPAPGothic","IPAGothic","Liberation Sans","Noto Sans CJK JP",sans-serif' text-anchor="middle">11</text>
<text x="14" y="445.6" font-size="13.5" fill="#1a1a1a" textLength="15.6" lengthAdjust="spacingAndGlyphs" font-family='"IPAPGothic","IPAGothic","Liberation Sans","Noto Sans CJK JP",sans-serif' text-anchor="middle">12</text>
<text x="14" y="463.6" font-size="13.5" fill="#1a1a1a" textLength="15.6" lengthAdjust="spacingAndGlyphs" font-family='"IPAPGothic","IPAGothic","Liberation Sans","Noto Sans CJK JP",sans-serif' text-anchor="middle">13</text>
<text x="14" y="481.6" font-size="13.5" fill="#1a1a1a" textLength="15.6" lengthAdjust="spacingAndGlyphs" font-family='"IPAPGothic","IPAGothic","Liberation Sans","Noto Sans CJK JP",sans-serif' text-anchor="middle">14</text>
<text x="14" y="499.6" font-size="13.5" fill="#1a1a1a" textLength="15.6" lengthAdjust="spacingAndGlyphs" font-family='"IPAPGothic","IPAGothic","Liberation Sans","Noto Sans CJK JP",sans-serif' text-anchor="middle">15</text>
<text x="14" y="517.6" font-size="13.5" fill="#1a1a1a" textLength="15.6" lengthAdjust="spacingAndGlyphs" font-family='"IPAPGothic","IPAGothic","Liberation Sans","Noto Sans CJK JP",sans-serif' text-anchor="middle">16</text>
<text x="14" y="535.6" font-size="13.5" fill="#1a1a1a" textLength="15.6" lengthAdjust="spacingAndGlyphs" font-family='"IPAPGothic","IPAGothic","Liberation Sans","Noto Sans CJK JP",sans-serif' text-anchor="middle">17</text>
<text x="14" y="553.6" font-size="13.5" fill="#1a1a1a" textLength="15.6" lengthAdjust="spacingAndGlyphs" font-family='"IPAPGothic","IPAGothic","Liberation Sans","Noto Sans CJK JP",sans-serif' text-anchor="middle">18</text>
<text x="14" y="571.6" font-size="13.5" fill="#1a1a1a" textLength="15.6" lengthAdjust="spacingAndGlyphs" font-family='"IPAPGothic","IPAGothic","Liberation Sans","Noto Sans CJK JP",sans-serif' text-anchor="middle">19</text>
<text x="14" y="589.6" font-size="13.5" fill="#1a1a1a" textLength="15.6" lengthAdjust="spacingAndGlyphs" font-family='"IPAPGothic","IPAGothic","Liberation Sans","Noto Sans CJK JP",sans-serif' text-anchor="middle">20</text>
<text x="14" y="607.6" font-size="13.5" fill="#1a1a1a" textLength="15.6" lengthAdjust="spacingAndGlyphs" font-family='"IPAPGothic","IPAGothic","Liberation Sans","Noto Sans CJK JP",sans-serif' text-anchor="middle">21</text>
<text x="14" y="625.6" font-size="13.5" fill="#1a1a1a" textLength="15.6" lengthAdjust="spacingAndGlyphs" font-family='"IPAPGothic","IPAGothic","Liberation Sans","Noto Sans CJK JP",sans-serif' text-anchor="middle">22</text>
<text x="14" y="643.6" font-size="13.5" fill="#1a1a1a" textLength="15.6" lengthAdjust="spacingAndGlyphs" font-family='"IPAPGothic","IPAGothic","Liberation Sans","Noto Sans CJK JP",sans-serif' text-anchor="middle">23</text>
<text x="32" y="247.5" font-size="13.5" fill="#000" textLength="50" lengthAdjust="spacingAndGlyphs" font-family='"IPAPGothic","IPAGothic","Liberation Sans","Noto Sans CJK JP",sans-serif'>WDposv</text>
<text x="32.3" y="265.5" font-size="13.5" fill="#000" textLength="8.7" lengthAdjust="spacingAndGlyphs" font-family='"IPAPGothic","IPAGothic","Liberation Sans","Noto Sans CJK JP",sans-serif'>A</text>
<text x="248.9" y="265.5" font-size="13.5" fill="#000" textLength="8.7" lengthAdjust="spacingAndGlyphs" font-family='"IPAPGothic","IPAGothic","Liberation Sans","Noto Sans CJK JP",sans-serif'>B</text>
<text x="319.6" y="265.5" font-size="13.5" fill="#000" textLength="9.1" lengthAdjust="spacingAndGlyphs" font-family='"IPAPGothic","IPAGothic","Liberation Sans","Noto Sans CJK JP",sans-serif'>X</text>
<text x="79.8" y="283.5" font-size="13.5" fill="#000" textLength="17.7" lengthAdjust="spacingAndGlyphs" font-family='"IPAPGothic","IPAGothic","Liberation Sans","Noto Sans CJK JP",sans-serif'>2.2</text>
<text x="64.3" y="301.5" font-size="13.5" fill="#000" textLength="30.7" lengthAdjust="spacingAndGlyphs" font-family='"IPAPGothic","IPAGothic","Liberation Sans","Noto Sans CJK JP",sans-serif'>−0.11</text>
<text x="64.3" y="319.5" font-size="13.5" fill="#000" textLength="32.8" lengthAdjust="spacingAndGlyphs" font-family='"IPAPGothic","IPAGothic","Liberation Sans","Noto Sans CJK JP",sans-serif'>−0.32</text>
<text x="143.5" y="301.5" font-size="13.5" fill="#000" textLength="25.4" lengthAdjust="spacingAndGlyphs" font-family='"IPAPGothic","IPAGothic","Liberation Sans","Noto Sans CJK JP",sans-serif'>2.93</text>
<text x="143.5" y="319.5" font-size="13.5" fill="#000" textLength="23.7" lengthAdjust="spacingAndGlyphs" font-family='"IPAPGothic","IPAGothic","Liberation Sans","Noto Sans CJK JP",sans-serif'>0.81</text>
<text x="215.7" y="319.5" font-size="13.5" fill="#000" textLength="25.2" lengthAdjust="spacingAndGlyphs" font-family='"IPAPGothic","IPAGothic","Liberation Sans","Noto Sans CJK JP",sans-serif'>2.37</text>
<text x="271.7" y="283.5" font-size="13.5" fill="#000" textLength="41.8" lengthAdjust="spacingAndGlyphs" font-family='"IPAPGothic","IPAGothic","Liberation Sans","Noto Sans CJK JP",sans-serif'>−1.566</text>
<text x="264.1" y="301.5" font-size="13.5" fill="#000" textLength="49.4" lengthAdjust="spacingAndGlyphs" font-family='"IPAPGothic","IPAGothic","Liberation Sans","Noto Sans CJK JP",sans-serif'>−2.8425</text>
<text x="264.1" y="319.5" font-size="13.5" fill="#000" textLength="49.4" lengthAdjust="spacingAndGlyphs" font-family='"IPAPGothic","IPAGothic","Liberation Sans","Noto Sans CJK JP",sans-serif'>−1.1765</text>
<text x="319.6" y="283.5" font-size="13.5" fill="#000" textLength="65.2" lengthAdjust="spacingAndGlyphs" font-family='"IPAPGothic","IPAGothic","Liberation Sans","Noto Sans CJK JP",sans-serif'>C5,D3:D5)</text>
<text x="352.2" y="301.5" font-size="13.5" fill="#000" textLength="33.7" lengthAdjust="spacingAndGlyphs" font-family='"IPAPGothic","IPAGothic","Liberation Sans","Noto Sans CJK JP",sans-serif'>−0.92</text>
<text x="352.2" y="319.5" font-size="13.5" fill="#000" textLength="33.7" lengthAdjust="spacingAndGlyphs" font-family='"IPAPGothic","IPAGothic","Liberation Sans","Noto Sans CJK JP",sans-serif'>−0.29</text>
<text x="327.8" y="337.5" font-size="13.5" fill="#000" textLength="55.9" lengthAdjust="spacingAndGlyphs" font-family='"IPAPGothic","IPAGothic","Liberation Sans","Noto Sans CJK JP",sans-serif'>0.446791</text>
<text x="378.7" y="355.5" font-size="13.5" fill="#000" textLength="7.8" lengthAdjust="spacingAndGlyphs" font-family='"IPAPGothic","IPAGothic","Liberation Sans","Noto Sans CJK JP",sans-serif'>0</text>
</g>
<g id="dialog">
<rect x="406" y="216" width="486" height="394" fill="#000" opacity="0.23" filter="url(#blur6)"/>
<rect x="407.5" y="213.5" width="477" height="387" fill="#f0f0f0" stroke="#6b6b6b" stroke-width="1" class="crisp"/>
<rect x="408" y="214" width="476" height="30" fill="#ffffff" class="crisp"/>
<text x="416.4" y="233.3" font-size="12" fill="#000000" textLength="57.8" lengthAdjust="spacingAndGlyphs">関数の引数</text>
<text x="813.2" y="233" font-size="12.5" fill="#000000" textLength="6" lengthAdjust="spacingAndGlyphs">?</text>
<path d="M856 223.2l10 9.8 M866 223.2l-10 9.8" fill="none" stroke="#111" stroke-width="1.1" />
<rect x="414.5" y="259.5" width="462" height="151" fill="none" stroke="#dcdcdc" stroke-width="1" class="crisp"/>
<rect x="418.5" y="254" width="51" height="10" fill="#f0f0f0" />
<text x="420.7" y="264.3" font-size="12.3" fill="#000000" textLength="46.6" lengthAdjust="spacingAndGlyphs">WDposv</text>
<rect x="463.5" y="275.5" width="197" height="22" fill="#ffffff" stroke="#a8aab0" stroke-width="1" class="crisp"/>
<rect x="639.5" y="275.5" width="21" height="22" fill="#e1e1e1" stroke="#a8aab0" stroke-width="1" class="crisp"/>
<rect x="640.5" y="276.5" width="19" height="20" fill="none" stroke="#b4b4b4" stroke-width="1" class="crisp"/>
<rect x="642" y="279.0" width="15" height="13" fill="#ffffff" class="crisp"/>
<path d="M649 279.8l4.4 4.4l-1.2 1.2l-2.2-2.2v4.7h-2v-4.7l-2.2 2.2l-1.2-1.2z" fill="#000" />
<rect x="645" y="289.0" width="8.2" height="1.1" fill="#000" />
<text x="428.8" y="290.9" font-size="12.3" fill="#000000" textLength="25.2" lengthAdjust="spacingAndGlyphs">Uplo</text>
<rect x="467.5" y="278.5" width="16.5" height="14" fill="#c4c4c4" class="crisp"/>
<rect x="484" y="278.5" width="1" height="14" fill="#000" class="crisp"/>
<text x="468.8" y="290.1" font-size="12.3" fill="#000000" textLength="14.5" lengthAdjust="spacingAndGlyphs">"L"</text>
<text x="671.2" y="290.9" font-size="12.3" fill="#000000" textLength="7.6" lengthAdjust="spacingAndGlyphs">=</text>
<text x="689.7" y="290.9" font-size="12.3" fill="#000000" textLength="15.4" lengthAdjust="spacingAndGlyphs">"L"</text>
<rect x="463.5" y="302.5" width="197" height="22" fill="#ffffff" stroke="#a8aab0" stroke-width="1" class="crisp"/>
<rect x="639.5" y="302.5" width="21" height="22" fill="#e1e1e1" stroke="#a8aab0" stroke-width="1" class="crisp"/>
<rect x="640.5" y="303.5" width="19" height="20" fill="none" stroke="#b4b4b4" stroke-width="1" class="crisp"/>
<rect x="642" y="306.0" width="15" height="13" fill="#ffffff" class="crisp"/>
<path d="M649 306.8l4.4 4.4l-1.2 1.2l-2.2-2.2v4.7h-2v-4.7l-2.2 2.2l-1.2-1.2z" fill="#000" />
<rect x="645" y="316.0" width="8.2" height="1.1" fill="#000" />
<text x="445.7" y="317.9" font-size="12.3" fill="#000000" textLength="8.3" lengthAdjust="spacingAndGlyphs">N</text>
<text x="467.3" y="316.8" font-size="12.3" fill="#000000" textLength="6.5" lengthAdjust="spacingAndGlyphs">3</text>
<text x="671.2" y="317.9" font-size="12.3" fill="#000000" textLength="7.6" lengthAdjust="spacingAndGlyphs">=</text>
<text x="689.7" y="317.9" font-size="12.3" fill="#000000" textLength="6.6" lengthAdjust="spacingAndGlyphs">3</text>
<rect x="463.5" y="329.5" width="197" height="22" fill="#ffffff" stroke="#a8aab0" stroke-width="1" class="crisp"/>
<rect x="639.5" y="329.5" width="21" height="22" fill="#e1e1e1" stroke="#a8aab0" stroke-width="1" class="crisp"/>
<rect x="640.5" y="330.5" width="19" height="20" fill="none" stroke="#b4b4b4" stroke-width="1" class="crisp"/>
<rect x="642" y="333.0" width="15" height="13" fill="#ffffff" class="crisp"/>
<path d="M649 333.8l4.4 4.4l-1.2 1.2l-2.2-2.2v4.7h-2v-4.7l-2.2 2.2l-1.2-1.2z" fill="#000" />
<rect x="645" y="343.0" width="8.2" height="1.1" fill="#000" />
<text x="445.5" y="344.9" font-size="12.3" fill="#000000" textLength="8.5" lengthAdjust="spacingAndGlyphs">A</text>
<text x="467.3" y="343.8" font-size="12.3" fill="#000000" textLength="35" lengthAdjust="spacingAndGlyphs">A3:C5</text>
<text x="671.2" y="344.9" font-size="12.3" fill="#000000" textLength="7.6" lengthAdjust="spacingAndGlyphs">=</text>
<text x="689.7" y="344.9" font-size="12.3" fill="#000000" textLength="178.9" lengthAdjust="spacingAndGlyphs">{2.2,0,0;-0.11,2.93,0;-0.32,0...</text>
<rect x="463.5" y="356.5" width="197" height="22" fill="#ffffff" stroke="#a8aab0" stroke-width="1" class="crisp"/>
<rect x="639.5" y="356.5" width="21" height="22" fill="#e1e1e1" stroke="#a8aab0" stroke-width="1" class="crisp"/>
<rect x="640.5" y="357.5" width="19" height="20" fill="none" stroke="#b4b4b4" stroke-width="1" class="crisp"/>
<rect x="642" y="360.0" width="15" height="13" fill="#ffffff" class="crisp"/>
<path d="M649 360.8l4.4 4.4l-1.2 1.2l-2.2-2.2v4.7h-2v-4.7l-2.2 2.2l-1.2-1.2z" fill="#000" />
<rect x="645" y="370.0" width="8.2" height="1.1" fill="#000" />
<text x="446.5" y="371.9" font-size="12.3" fill="#000000" textLength="7.5" lengthAdjust="spacingAndGlyphs">B</text>
<text x="467.3" y="370.8" font-size="12.3" fill="#000000" textLength="36.6" lengthAdjust="spacingAndGlyphs">D3:D5</text>
<text x="671.2" y="371.9" font-size="12.3" fill="#000000" textLength="7.6" lengthAdjust="spacingAndGlyphs">=</text>
<text x="689.7" y="371.9" font-size="12.3" fill="#000000" textLength="148.2" lengthAdjust="spacingAndGlyphs">{-1.566;-2.8425;-1.1765}</text>
<rect x="463.5" y="383.5" width="197" height="22" fill="#ffffff" stroke="#a8aab0" stroke-width="1" class="crisp"/>
<rect x="639.5" y="383.5" width="21" height="22" fill="#e1e1e1" stroke="#a8aab0" stroke-width="1" class="crisp"/>
<rect x="640.5" y="384.5" width="19" height="20" fill="none" stroke="#b4b4b4" stroke-width="1" class="crisp"/>
<rect x="642" y="387.0" width="15" height="13" fill="#ffffff" class="crisp"/>
<path d="M649 387.8l4.4 4.4l-1.2 1.2l-2.2-2.2v4.7h-2v-4.7l-2.2 2.2l-1.2-1.2z" fill="#000" />
<rect x="645" y="397.0" width="8.2" height="1.1" fill="#000" />
<text x="427.4" y="398.9" font-size="12.3" fill="#000000" textLength="26.6" lengthAdjust="spacingAndGlyphs">Nrhs</text>
<text x="671.2" y="398.9" font-size="12.3" fill="#000000" textLength="7.6" lengthAdjust="spacingAndGlyphs">=</text>
<text x="671.2" y="429.8" font-size="12.3" fill="#000000" textLength="7.6" lengthAdjust="spacingAndGlyphs">=</text>
<text x="689.7" y="429.8" font-size="12.3" fill="#000000" textLength="176.1" lengthAdjust="spacingAndGlyphs">{-0.8;-0.92;-0.29;0.4467910...</text>
<text x="414" y="449" font-size="12" fill="#000000" textLength="253.7" lengthAdjust="spacingAndGlyphs">連立一次方程式 AX = B の解 (正定値対称行列)</text>
<text x="586.4" y="477.3" font-size="12" fill="#000000" textLength="210.5" lengthAdjust="spacingAndGlyphs">Uplo ：上三角/下三角指定 (U または L)</text>
<rect x="414" y="523" width="464" height="1" fill="#dcdcdc" class="crisp"/>
<text x="413.8" y="549.7" font-size="12" fill="#000000" textLength="70.6" lengthAdjust="spacingAndGlyphs">数式の結果 =</text>
<text x="495.6" y="549.7" font-size="12.3" fill="#000000" textLength="22.4" lengthAdjust="spacingAndGlyphs">-0.8</text>
<text x="413.8" y="583.2" font-size="12" fill="#0563c1" textLength="100" lengthAdjust="spacingAndGlyphs">この関数のヘルプ(H)</text>
<rect x="413.8" y="584" width="100" height="1" fill="#0563c1" class="crisp"/>
<rect x="720" y="567" width="72" height="23" fill="#e1e1e1" stroke="#0078d7" stroke-width="2" class="crisp"/>
<text x="747.1" y="583" font-size="12.3" fill="#000000" textLength="17" lengthAdjust="spacingAndGlyphs">OK</text>
<rect x="803.5" y="566.5" width="73" height="24" fill="#e1e1e1" stroke="#adadad" stroke-width="1" class="crisp"/>
<text x="816" y="583.6" font-size="13" fill="#000000" textLength="46.8" lengthAdjust="spacingAndGlyphs">キャンセル</text>
</g>
<rect x="0" y="0" width="966" height="1" fill="#c2c2c2" class="crisp"/>
<rect x="0" y="1" width="966" height="1" fill="#6f7f75" class="crisp"/>
<rect x="0" y="0" width="1" height="649" fill="#8c8c8c" class="crisp"/>
</svg>
</body></html>
